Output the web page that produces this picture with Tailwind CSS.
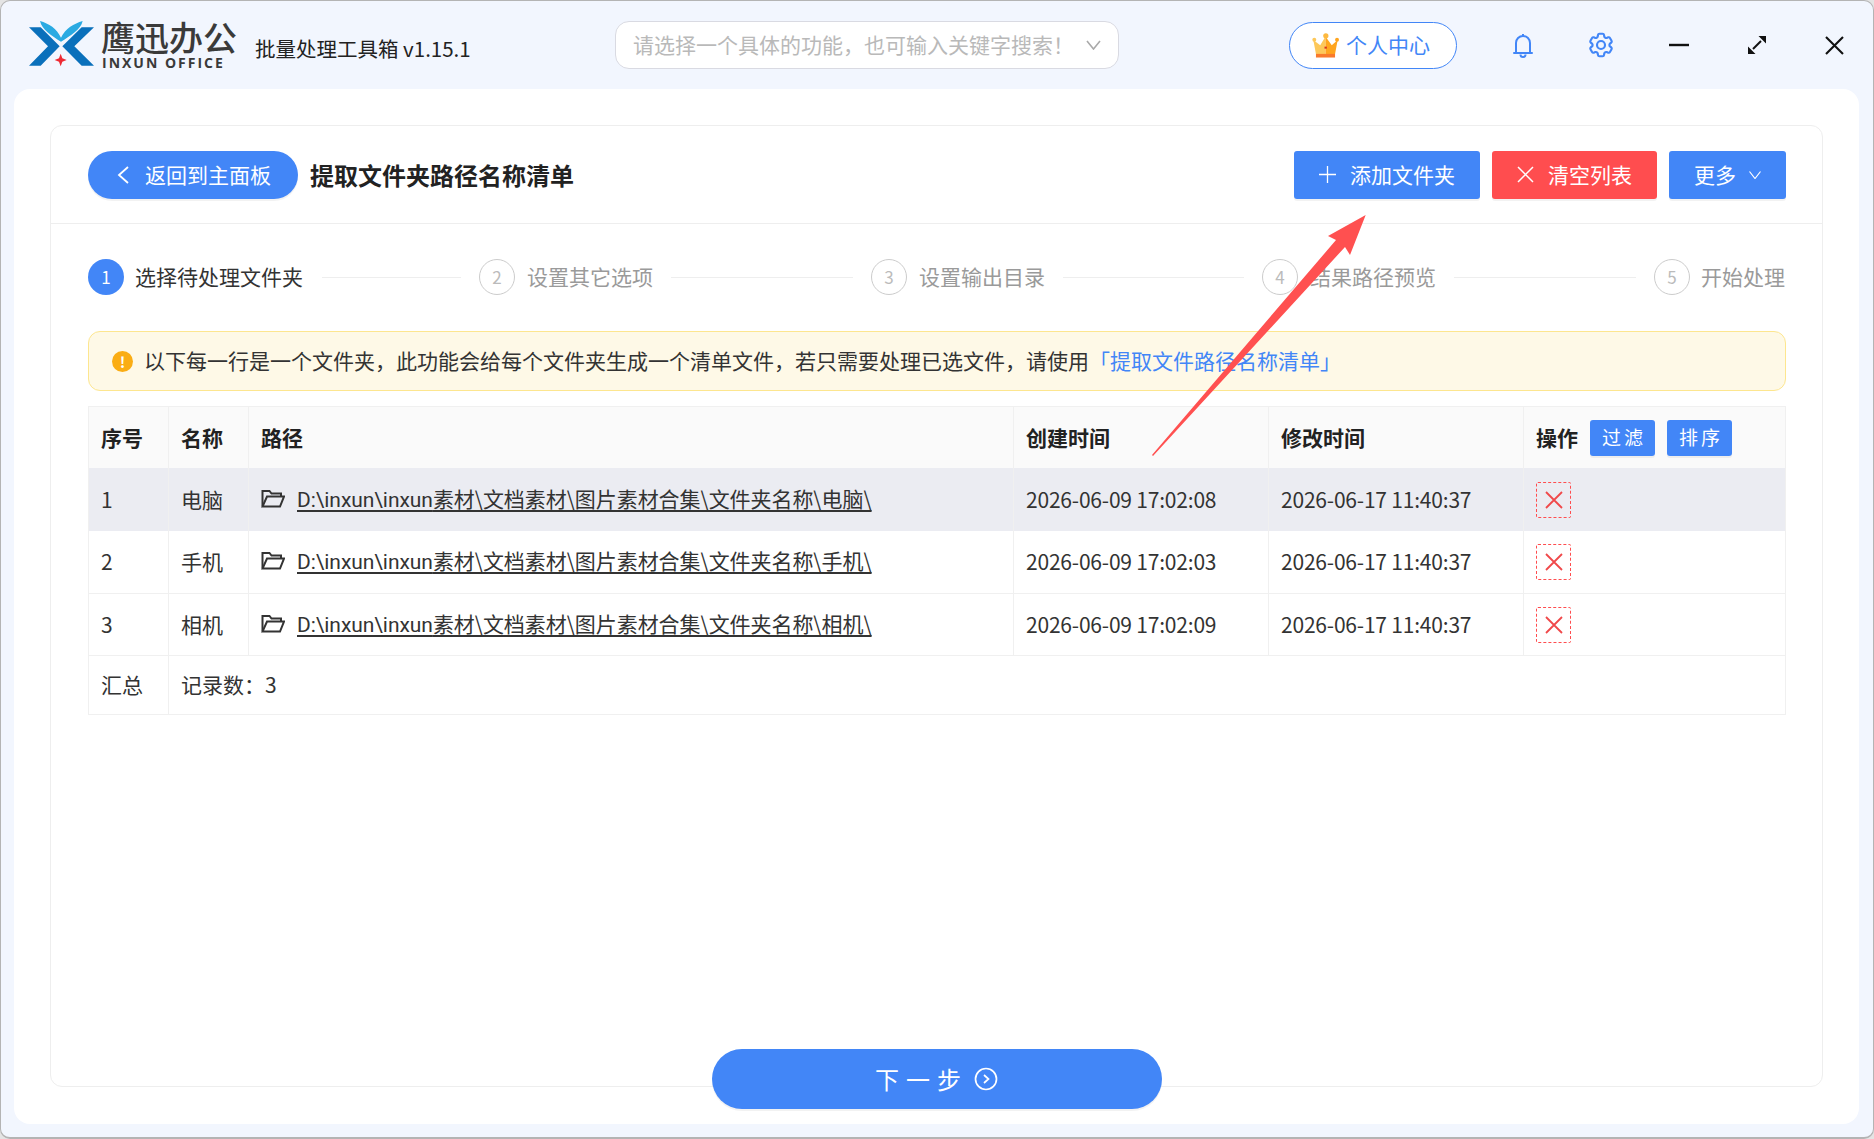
<!DOCTYPE html>
<html lang="zh-CN">
<head>
    <meta charset="UTF-8">
    <title>批量处理工具箱</title>
    <script src="https://cdn.jsdelivr.net/npm/@tailwindcss/browser@4"></script>
</head>
<body class="bg-[#e4e4e4] font-['Noto_Sans_CJK_SC',sans-serif] text-[#333]">
<div class="relative w-[1874px] h-[1139px] overflow-hidden">
    <div class="flex flex-col h-full rounded-[10px] border border-b-2 border-[#b4b4b4] bg-[#f2f6fe]">

        <!-- top bar -->
        <div class="flex items-center h-[88px] shrink-0">
            <svg class="ml-[27px] w-[66px] h-[46px] mt-[-2px]" viewBox="22 16 198 138">
                <path d="M58 16C85 24 108 38 121 66C134 38 160 24 186 16C180 42 150 60 121 78C92 60 64 42 58 16Z" fill="#2aaae2"/>
                <path d="M25 35H60L117 92L60 150H25L82 92Z" fill="#0a70bb"/>
                <path d="M220 35H183L125 92L183 150H220L161 92Z" fill="#0a70bb"/>
                <path d="M120 114L125 128L138 133L125 138L120 152L115 138L102 133L115 128Z" fill="#ee2a33"/>
            </svg>
            <div class="ml-[7px] w-[140px] flex flex-col">
                <span class="text-[34px] leading-[34px] font-medium text-[#3a3a3a]">鹰迅办公</span>
                <span class="text-[14px] leading-[15px] font-bold text-[#3a3a3a] tracking-[2px] mt-[1px] ml-[1px] font-['Open_Sans',sans-serif] whitespace-nowrap">INXUN OFFICE</span>
            </div>
            <span class="ml-[14px] w-[293px] text-[20.5px] leading-[30px] text-[#222] mt-[6px] whitespace-nowrap">批量处理工具箱 v1.15.1</span>
            <div class="ml-[67px] flex items-center justify-between w-[504px] h-[48px] rounded-[14px] border border-[#d9dae2] bg-white pl-[17px] pr-[17px]">
                <span class="text-[21px] text-[#b9b9b9] whitespace-nowrap">请选择一个具体的功能，也可输入关键字搜索！</span>
                <svg class="w-[15px] h-[10px]" viewBox="0 0 15 10" fill="none" stroke="#a9a9a9" stroke-width="1.6"><path d="M1 1l6.5 8L14 1"/></svg>
            </div>
            <div class="ml-[170px] flex items-center w-[168px] h-[47px] rounded-full border border-[#4286f7] bg-white pl-[22px]">
                <svg class="w-[27px] h-[25px]" viewBox="40 45 82 75">
                    <path d="M52 108L44 66L65 82L81 55V108Z" fill="#fdc85a"/>
                    <path d="M81 55L100 82L118 66L110 108H81Z" fill="#ffa51f"/>
                    <circle cx="47" cy="65" r="6" fill="#fdc85a"/>
                    <circle cx="82" cy="53" r="8" fill="#fdb93f"/>
                    <circle cx="116" cy="65" r="6" fill="#ffa51f"/>
                    <rect x="52" y="108" width="58" height="11" fill="#f97a2c"/>
                    <rect x="78" y="86" width="7" height="6" fill="#d6301f"/>
                </svg>
                <span class="ml-[7px] text-[21px] text-[#4286f7] whitespace-nowrap">个人中心</span>
            </div>
            <svg class="ml-[56px] w-[20px] h-[25px]" viewBox="0 0 20 25" fill="none" stroke="#4286f7" stroke-width="2">
                <path d="M3 19.5V10a7 7 0 0 1 14 0v9.5"/>
                <path d="M1 20h18" stroke-linecap="round"/>
                <path d="M10 1v2" />
                <path d="M7.5 21.5a2.5 2.5 0 0 0 5 0"/>
            </svg>
            <svg class="ml-[53px] w-[30px] h-[30px]" viewBox="0 0 24 24" fill="none" stroke="#4286f7" stroke-width="1.7">
                <path d="M9.594 3.94c.09-.542.56-.94 1.11-.94h2.593c.55 0 1.02.398 1.11.94l.213 1.281c.063.374.313.686.645.87.074.04.147.083.22.127.325.196.72.257 1.075.124l1.217-.456a1.125 1.125 0 0 1 1.37.49l1.296 2.247a1.125 1.125 0 0 1-.26 1.431l-1.003.827c-.293.241-.438.613-.43.992a7.723 7.723 0 0 1 0 .255c-.008.378.137.75.43.991l1.004.827c.424.35.534.955.26 1.43l-1.298 2.247a1.125 1.125 0 0 1-1.369.491l-1.217-.456c-.355-.133-.75-.072-1.076.124a6.47 6.47 0 0 1-.22.128c-.331.183-.581.495-.644.869l-.213 1.281c-.09.543-.56.94-1.11.94h-2.594c-.55 0-1.019-.398-1.11-.94l-.213-1.281c-.062-.374-.312-.686-.644-.87a6.52 6.52 0 0 1-.22-.127c-.325-.196-.72-.257-1.076-.124l-1.217.456a1.125 1.125 0 0 1-1.369-.49l-1.297-2.247a1.125 1.125 0 0 1 .26-1.431l1.004-.827c.292-.24.437-.613.43-.991a6.932 6.932 0 0 1 0-.255c.007-.38-.138-.751-.43-.992l-1.004-.827a1.125 1.125 0 0 1-.26-1.43l1.297-2.247a1.125 1.125 0 0 1 1.37-.491l1.216.456c.356.133.751.072 1.076-.124.072-.044.146-.086.22-.128.332-.183.582-.495.644-.869l.214-1.28Z"/>
                <circle cx="12" cy="12" r="3.2"/>
            </svg>
            <svg class="ml-[53px] w-[20px] h-[20px]" viewBox="0 0 20 20" stroke="#111" stroke-width="2.4"><path d="M0 10h20"/></svg>
            <svg class="ml-[58px] w-[20px] h-[20px]" viewBox="0 0 20 20" fill="#111" stroke="#111">
                <path d="M6 14L14 6" stroke-width="2"/>
                <path d="M11.5 1h7.5v7.5zM1 11.5v7.5h7.5z" stroke="none"/>
            </svg>
            <svg class="ml-[58px] w-[19px] h-[19px]" viewBox="0 0 19 19" stroke="#111" stroke-width="2.1"><path d="M1 1l17 17M18 1L1 18"/></svg>
        </div>

        <!-- white panel -->
        <div class="flex-1 flex flex-col ml-[13px] mr-[14px] mb-[13px] bg-white rounded-[16px] pt-[36px] px-[36px]">
            <div class="flex-1 flex flex-col rounded-[12px] border border-[#eeeeee]">

                <div class="flex items-center h-[98px] shrink-0 border-b border-[#eeeeee] pl-[37px] pr-[36px]">
                    <div class="flex items-center w-[210px] h-[48px] rounded-full bg-[#4286f7] pl-[29px] shadow-[0_2px_0_rgba(0,0,0,0.05)]">
                        <svg class="w-[12px] h-[18px]" viewBox="0 0 12 18" fill="none" stroke="#fff" stroke-width="1.8"><path d="M11 1L2 9l9 8"/></svg>
                        <span class="ml-[16px] text-[21px] text-white whitespace-nowrap">返回到主面板</span>
                    </div>
                    <span class="ml-[12px] text-[24px] font-bold text-[#222] whitespace-nowrap">提取文件夹路径名称清单</span>
                    <div class="flex-1"></div>
                    <div class="flex items-center justify-center gap-[14px] w-[186px] h-[48px] rounded-[3px] bg-[#4286f7] shadow-[0_2px_0_rgba(0,0,0,0.05)]">
                        <svg class="w-[17px] h-[17px]" viewBox="0 0 17 17" stroke="#fff" stroke-width="1.3"><path d="M8.5 0v17M0 8.5h17"/></svg>
                        <span class="text-[21px] text-white whitespace-nowrap">添加文件夹</span>
                    </div>
                    <div class="flex items-center justify-center gap-[14px] ml-[12px] w-[165px] h-[48px] rounded-[3px] bg-[#ff4d4f] shadow-[0_2px_0_rgba(0,0,0,0.05)]">
                        <svg class="w-[17px] h-[17px]" viewBox="0 0 17 17" stroke="#fff" stroke-width="1.5"><path d="M1 1l15 15M16 1L1 16"/></svg>
                        <span class="text-[21px] text-white whitespace-nowrap">清空列表</span>
                    </div>
                    <div class="flex items-center justify-center gap-[13px] ml-[12px] w-[117px] h-[48px] rounded-[3px] bg-[#4286f7] shadow-[0_2px_0_rgba(0,0,0,0.05)]">
                        <span class="text-[21px] text-white whitespace-nowrap">更多</span>
                        <svg class="w-[12px] h-[8px]" viewBox="0 0 12 8" fill="none" stroke="#fff" stroke-width="1.2"><path d="M.5.5L6 7.5 11.5.5"/></svg>
                    </div>
                </div>

                <!-- steps -->
                <div class="flex items-center h-[36px] mt-[35px] pl-[37px] pr-[36px] text-[21px] text-[#9a9a9a] whitespace-nowrap">
                    <div class="flex items-center justify-center w-[36px] h-[36px] rounded-full bg-[#4286f7] text-white text-[17px]">1</div>
                    <span class="ml-[11px] w-[169px] text-[#333]">选择待处理文件夹</span>
                    <div class="ml-[18px] w-[139px] h-px bg-[#eeeeee]"></div>
                    <div class="ml-[18px] flex items-center justify-center w-[36px] h-[36px] rounded-full border border-[#cccccc] text-[17px] text-[#bbbbbb]">2</div>
                    <span class="ml-[12px] w-[126px]">设置其它选项</span>
                    <div class="ml-[18px] w-[182px] h-px bg-[#eeeeee]"></div>
                    <div class="ml-[18px] flex items-center justify-center w-[36px] h-[36px] rounded-full border border-[#cccccc] text-[17px] text-[#bbbbbb]">3</div>
                    <span class="ml-[12px] w-[126px]">设置输出目录</span>
                    <div class="ml-[18px] w-[181px] h-px bg-[#eeeeee]"></div>
                    <div class="ml-[18px] flex items-center justify-center w-[36px] h-[36px] rounded-full border border-[#cccccc] text-[17px] text-[#bbbbbb]">4</div>
                    <span class="ml-[12px] w-[126px]">结果路径预览</span>
                    <div class="ml-[18px] w-[182px] h-px bg-[#eeeeee]"></div>
                    <div class="ml-[18px] flex items-center justify-center w-[36px] h-[36px] rounded-full border border-[#cccccc] text-[17px] text-[#bbbbbb]">5</div>
                    <span class="ml-[11px]">开始处理</span>
                </div>

                <!-- notice -->
                <div class="flex items-center h-[60px] mt-[36px] ml-[37px] mr-[36px] rounded-[12px] border border-[#fde68f] bg-[#fef9e7] pl-[23px] whitespace-nowrap text-[21px] leading-[30px]">
                    <div class="flex items-center justify-center w-[21px] h-[21px] rounded-full bg-[#faad14] text-white text-[15px] font-bold leading-none">!</div>
                    <span class="ml-[11px] mb-[3px]">以下每一行是一个文件夹，此功能会给每个文件夹生成一个清单文件，若只需要处理已选文件，请使用</span>
                    <span class="mb-[3px] text-[#4286f7]">「提取文件路径名称清单」</span>
                </div>

                <!-- table -->
                <div class="mt-[15px] ml-[37px] mr-[36px] border-t border-r border-l border-[#f0f0f0] text-[21px] whitespace-nowrap">
                    <div class="grid grid-cols-[80px_80px_765px_255px_255px_1fr] h-[61px] items-stretch bg-[#fafafa] font-bold text-[#222]">
                        <div class="flex items-center pl-[12px] border-r border-[#f0f0f0]">序号</div>
                        <div class="flex items-center pl-[12px] border-r border-[#f0f0f0]">名称</div>
                        <div class="flex items-center pl-[12px] border-r border-[#f0f0f0]">路径</div>
                        <div class="flex items-center pl-[12px] border-r border-[#f0f0f0]">创建时间</div>
                        <div class="flex items-center pl-[12px] border-r border-[#f0f0f0]">修改时间</div>
                        <div class="flex items-center pl-[12px]">
                            操作
                            <div class="ml-[12px] flex items-center justify-center w-[65px] h-[36px] pl-[3px] rounded-[3px] bg-[#4286f7] text-white font-normal text-[19px] tracking-[3px] shadow-[0_2px_0_rgba(0,0,0,0.05)]">过滤</div>
                            <div class="ml-[12px] flex items-center justify-center w-[65px] h-[36px] pl-[3px] rounded-[3px] bg-[#4286f7] text-white font-normal text-[19px] tracking-[3px] shadow-[0_2px_0_rgba(0,0,0,0.05)]">排序</div>
                        </div>
                    </div>

                    <div class="grid grid-cols-[80px_80px_765px_255px_255px_1fr] h-[63px] items-stretch bg-[#ebecf2]">
                        <div class="flex items-center pl-[12px] border-r border-[#f0f0f0]">1</div>
                        <div class="flex items-center pl-[12px] border-r border-[#f0f0f0]">电脑</div>
                        <div class="flex items-center pl-[12px] border-r border-[#f0f0f0]">
                            <svg class="w-[24px] h-[19px] mb-[3px]" viewBox="0 0 24 19" fill="none" stroke="#333" stroke-width="2"><path d="M1.5 17V2h7l2 2.5h9.5V7"/><path d="M1.5 17.5h17.5L23 7.5H6z"/></svg>
                            <span class="ml-[12px] underline decoration-2 underline-offset-[3px] tracking-[-0.06px]"><span class="font-['Roboto',sans-serif]">D:\inxun\inxun</span>素材\文档素材\图片素材合集\文件夹名称\电脑\</span>
                        </div>
                        <div class="flex items-center pl-[12px] border-r border-[#f0f0f0] tracking-[-0.2px]">2026-06-09 17:02:08</div>
                        <div class="flex items-center pl-[12px] border-r border-[#f0f0f0] tracking-[-0.2px]">2026-06-17 11:40:37</div>
                        <div class="flex items-center pl-[12px]">
                            <div class="flex items-center justify-center w-[35px] h-[36px] rounded-[2px] border border-dashed border-[#ff4d4f]">
                                <svg class="w-[18px] h-[18px]" viewBox="0 0 18 18" stroke="#f0484a" stroke-width="1.8"><path d="M1 1l16 16M17 1L1 17"/></svg>
                            </div>
                        </div>
                    </div>

                    <div class="grid grid-cols-[80px_80px_765px_255px_255px_1fr] h-[63px] items-stretch border-b border-[#f0f0f0]">
                        <div class="flex items-center pl-[12px] border-r border-[#f0f0f0]">2</div>
                        <div class="flex items-center pl-[12px] border-r border-[#f0f0f0]">手机</div>
                        <div class="flex items-center pl-[12px] border-r border-[#f0f0f0]">
                            <svg class="w-[24px] h-[19px] mb-[3px]" viewBox="0 0 24 19" fill="none" stroke="#333" stroke-width="2"><path d="M1.5 17V2h7l2 2.5h9.5V7"/><path d="M1.5 17.5h17.5L23 7.5H6z"/></svg>
                            <span class="ml-[12px] underline decoration-2 underline-offset-[3px] tracking-[-0.06px]"><span class="font-['Roboto',sans-serif]">D:\inxun\inxun</span>素材\文档素材\图片素材合集\文件夹名称\手机\</span>
                        </div>
                        <div class="flex items-center pl-[12px] border-r border-[#f0f0f0] tracking-[-0.2px]">2026-06-09 17:02:03</div>
                        <div class="flex items-center pl-[12px] border-r border-[#f0f0f0] tracking-[-0.2px]">2026-06-17 11:40:37</div>
                        <div class="flex items-center pl-[12px]">
                            <div class="flex items-center justify-center w-[35px] h-[36px] rounded-[2px] border border-dashed border-[#ff4d4f]">
                                <svg class="w-[18px] h-[18px]" viewBox="0 0 18 18" stroke="#f0484a" stroke-width="1.8"><path d="M1 1l16 16M17 1L1 17"/></svg>
                            </div>
                        </div>
                    </div>

                    <div class="grid grid-cols-[80px_80px_765px_255px_255px_1fr] h-[62px] items-stretch border-b border-[#f0f0f0]">
                        <div class="flex items-center pl-[12px] border-r border-[#f0f0f0]">3</div>
                        <div class="flex items-center pl-[12px] border-r border-[#f0f0f0]">相机</div>
                        <div class="flex items-center pl-[12px] border-r border-[#f0f0f0]">
                            <svg class="w-[24px] h-[19px] mb-[3px]" viewBox="0 0 24 19" fill="none" stroke="#333" stroke-width="2"><path d="M1.5 17V2h7l2 2.5h9.5V7"/><path d="M1.5 17.5h17.5L23 7.5H6z"/></svg>
                            <span class="ml-[12px] underline decoration-2 underline-offset-[3px] tracking-[-0.06px]"><span class="font-['Roboto',sans-serif]">D:\inxun\inxun</span>素材\文档素材\图片素材合集\文件夹名称\相机\</span>
                        </div>
                        <div class="flex items-center pl-[12px] border-r border-[#f0f0f0] tracking-[-0.2px]">2026-06-09 17:02:09</div>
                        <div class="flex items-center pl-[12px] border-r border-[#f0f0f0] tracking-[-0.2px]">2026-06-17 11:40:37</div>
                        <div class="flex items-center pl-[12px]">
                            <div class="flex items-center justify-center w-[35px] h-[36px] rounded-[2px] border border-dashed border-[#ff4d4f]">
                                <svg class="w-[18px] h-[18px]" viewBox="0 0 18 18" stroke="#f0484a" stroke-width="1.8"><path d="M1 1l16 16M17 1L1 17"/></svg>
                            </div>
                        </div>
                    </div>

                    <div class="grid grid-cols-[80px_1fr] h-[59px] items-stretch border-b border-[#f0f0f0]">
                        <div class="flex items-center pl-[12px] border-r border-[#f0f0f0]">汇总</div>
                        <div class="flex items-center pl-[12px]">记录数：3</div>
                    </div>
                </div>
            </div>

            <div class="self-center flex items-center justify-center gap-[6px] w-[450px] h-[60px] -mt-[38px] mb-[15px] rounded-full bg-[#4286f7] shadow-[0_2px_0_rgba(0,0,0,0.05)] relative">
                <span class="text-[24px] text-white tracking-[7px] whitespace-nowrap">下一步</span>
                <svg class="w-[24px] h-[24px]" viewBox="0 0 24 24" fill="none" stroke="#fff" stroke-width="1.7"><circle cx="12" cy="12" r="10.5"/><path d="M10 8l4.5 4-4.5 4"/></svg>
            </div>
        </div>
    </div>

    <!-- red annotation arrow -->
    <svg class="absolute left-0 top-0 w-[1874px] h-[1139px] pointer-events-none" viewBox="0 0 1874 1139">
        <path d="M1365.7 215L1328 236L1336 240L1152 455L1153 456L1345 247L1350 255Z" fill="#ff5050"/>
    </svg>
</div>
</body>
</html>
